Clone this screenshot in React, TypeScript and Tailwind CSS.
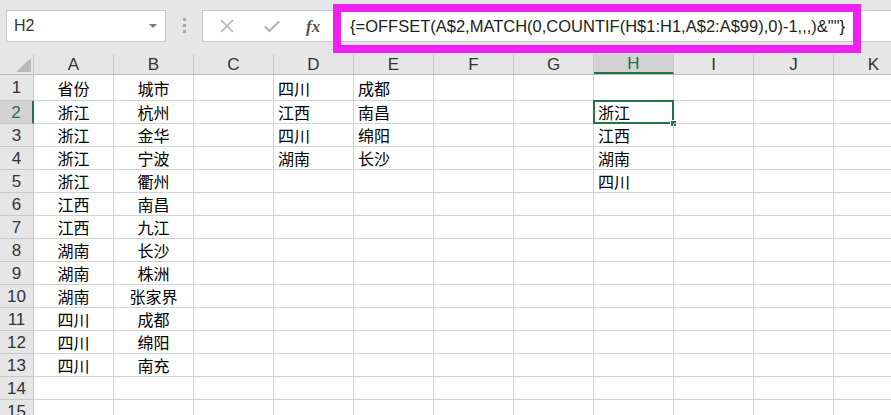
import React from 'react';

const COLS = ['A', 'B', 'C', 'D', 'E', 'F', 'G', 'H', 'I', 'J', 'K'];

// sparse cell data: row number -> column letter -> text
const DATA: Record<number, Record<string, string>> = {
  1: { A: '省份', B: '城市', D: '四川', E: '成都' },
  2: { A: '浙江', B: '杭州', D: '江西', E: '南昌', H: '浙江' },
  3: { A: '浙江', B: '金华', D: '四川', E: '绵阳', H: '江西' },
  4: { A: '浙江', B: '宁波', D: '湖南', E: '长沙', H: '湖南' },
  5: { A: '浙江', B: '衢州', H: '四川' },
  6: { A: '江西', B: '南昌' },
  7: { A: '江西', B: '九江' },
  8: { A: '湖南', B: '长沙' },
  9: { A: '湖南', B: '株洲' },
  10: { A: '湖南', B: '张家界' },
  11: { A: '四川', B: '成都' },
  12: { A: '四川', B: '绵阳' },
  13: { A: '四川', B: '南充' },
};

const ROWS = Array.from({ length: 15 }, (_, i) => i + 1);
const CENTERED = ['A', 'B'];

const FormulaBar: React.FC = () => (
  <div className="h-[54px] bg-[#e6e6e6] flex items-start pt-[10px]">
    {/* Name box */}
    <div className="ml-[6px] w-[160px] h-[32px] bg-white border border-[#c6c6c6] flex items-center justify-between pl-[7px] pr-[8px]">
      <span className="text-[16px] text-[#333]">H2</span>
      <span className="w-0 h-0 border-l-[4px] border-r-[4px] border-t-[4px] border-l-transparent border-r-transparent border-t-[#777]" />
    </div>
    {/* grip dots */}
    <div className="ml-[17px] mt-[8px] flex flex-col gap-[3px]">
      <span className="w-[3px] h-[3px] bg-[#a8a8a8]" />
      <span className="w-[3px] h-[3px] bg-[#a8a8a8]" />
      <span className="w-[3px] h-[3px] bg-[#a8a8a8]" />
    </div>
    {/* Formula box */}
    <div className="relative ml-[16px] flex-1 h-[32px] bg-white border border-[#c6c6c6] border-r-0 flex items-center">
      <div className="w-[130px] flex items-center pl-[16px]">
        <svg width="14" height="14" viewBox="0 0 14 14" className="ml-[1px]">
          <path d="M1 1 L13 13 M13 1 L1 13" stroke="#b4b4b4" strokeWidth="1.6" />
        </svg>
        <svg width="16" height="13" viewBox="0 0 16 13" className="ml-[30px]">
          <path d="M1 6.5 L5.5 11 L15 1.5" stroke="#b4b4b4" strokeWidth="2.2" fill="none" />
        </svg>
        <span className="ml-[26px] text-[17px] italic font-bold text-[#555] font-['Liberation_Serif',serif] leading-none">fx</span>
      </div>
      <span className="ml-[17px] text-[16.5px] text-[#222] whitespace-nowrap">
        {'{=OFFSET(A$2,MATCH(0,COUNTIF(H$1:H1,A$2:A$99),0)-1,,,)&""}'}
      </span>
      {/* highlight annotation */}
      <div className="absolute left-[130px] top-[-7px] w-[528px] h-[49px] border-[8px] border-[#f020f0]" />
    </div>
  </div>
);

const App: React.FC = () => {
  return (
    <div className="w-[891px] h-[415px] overflow-hidden bg-white font-['Liberation_Sans','Noto_Sans_CJK_SC',sans-serif]">
      <FormulaBar />

      {/* Column headers */}
      <div className="flex h-[21px] bg-[#e6e6e6] border-b border-[#bdbdbd]">
        <div className="relative w-[34px] shrink-0 border-r border-[#c8c8c8]">
          <svg className="absolute left-[16px] top-[4px]" width="15" height="14" viewBox="0 0 15 14">
            <path d="M15 0 L15 14 L0 14 Z" fill="#b9b9b9" />
          </svg>
        </div>
        {COLS.map((c) => (
          <div
            key={c}
            className={
              c === 'H'
                ? 'w-[80px] shrink-0 border-r border-[#c8c8c8] bg-[#d2d2d2] text-[#217346] border-b-2 border-b-[#217346] flex items-center justify-center text-[17px] leading-none'
                : 'w-[80px] shrink-0 border-r border-[#c8c8c8] text-[#333] flex items-center justify-center text-[17px] leading-none'
            }
          >
            {c}
          </div>
        ))}
      </div>

      {/* Rows */}
      {ROWS.map((r) => (
        <div key={r} className={r === 1 ? 'flex h-[26px]' : 'flex h-[23px]'}>
          <div
            className={
              r === 2
                ? 'w-[34px] shrink-0 bg-[#d2d2d2] border-r-2 border-r-[#217346] border-b border-[#c8c8c8] text-[#217346] flex items-center justify-center text-[17px] leading-none'
                : 'w-[34px] shrink-0 bg-[#e6e6e6] border-r border-[#c8c8c8] border-b border-b-[#c8c8c8] text-[#333] flex items-center justify-center text-[17px] leading-none'
            }
          >
            {r}
          </div>
          {COLS.map((c) => {
            const text = DATA[r]?.[c] ?? '';
            const selected = r === 2 && c === 'H';
            return (
              <div
                key={c}
                className={
                  CENTERED.includes(c)
                    ? 'relative w-[80px] shrink-0 border-r border-b border-[#d4d4d4] flex items-center justify-center text-[16px] text-black font-["Noto_Sans_CJK_SC",sans-serif] leading-none'
                    : 'relative w-[80px] shrink-0 border-r border-b border-[#d4d4d4] flex items-center pl-[4px] text-[16px] text-black font-["Noto_Sans_CJK_SC",sans-serif] leading-none'
                }
              >
                {text}
                {selected && (
                  <>
                    <div className="absolute -left-[1px] -top-[1px] -right-[1px] -bottom-[1px] border-2 border-[#217346]" />
                    <div className="absolute -right-[4px] -bottom-[4px] w-[7px] h-[7px] bg-[#217346] border border-white" />
                  </>
                )}
              </div>
            );
          })}
        </div>
      ))}
    </div>
  );
};

export default App;
